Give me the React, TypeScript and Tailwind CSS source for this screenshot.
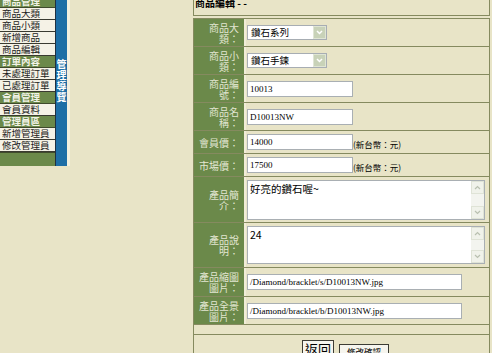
import React from 'react';

const cjk = "font-['Noto_Sans_CJK_TC',sans-serif]";
const serif = "font-['Liberation_Serif','Noto_Sans_CJK_TC',serif]";

const menu: { text: string; head?: boolean }[] = [
	{text: '商品管理', head: true},
	{text: '商品大類'},
	{text: '商品小類'},
	{text: '新增商品'},
	{text: '商品編輯'},
	{text: '訂單內容', head: true},
	{text: '未處理訂單'},
	{text: '已處理訂單'},
	{text: '會員管理', head: true},
	{text: '會員資料'},
	{text: '管理員區', head: true},
	{text: '新增管理員'},
	{text: '修改管理員'},
];

interface IRowProps {
	label: React.ReactNode,
	className: string,
	children?: React.ReactNode
}

const Row = ({label, className, children}: IRowProps) => {
	return (
		<div className={`flex shrink-0 border-b border-[#858a5f] ${className}`}>
			<div className="w-[52px] shrink-0 bg-[#6b894a] border-r-[2px] border-[#f1edd8] flex items-center justify-end pl-[3px] pr-[5px]">
				<span className="text-[10px] leading-[11px] text-[#e2e6d2] text-right">{label}</span>
			</div>
			<div className="flex-1 flex items-center pl-[1px]">{children}</div>
		</div>
	);
};

const Select = ({value}: { value: string }) => (
	<div className="w-[80px] h-[15px] bg-white border border-[#a7adb3] flex items-center justify-between">
		<span className="text-[9.5px] leading-[13px] pl-[3px] text-black">{value}</span>
		<div className="w-[13px] h-[13px] bg-[#c8d2b8] border border-[#dfe5d4] flex items-center justify-center">
			<svg width="7" height="5" viewBox="0 0 7 5">
				<path d="M1 1 L3.5 3.5 L6 1" stroke="#ffffff" strokeWidth="1.5" fill="none"/>
			</svg>
		</div>
	</div>
);

const Input = ({value, className}: { value: string, className: string }) => (
	<div className={`h-[16px] bg-white border border-[#a9afb3] flex items-center pl-[2px] ${className}`}>
		<span className={`${serif} text-[9px] leading-[12px] text-black whitespace-nowrap`}>{value}</span>
	</div>
);

const TextArea = ({value, className}: { value: string, className: string }) => (
	<div className={`w-[238px] bg-white border border-[#a9afb3] flex ${className}`}>
		<span className="flex-1 text-[10.5px] leading-[13px] pl-[2px] pt-[1px] text-black">{value}</span>
		<div className="w-[13px] bg-[#f3f4ef] flex flex-col justify-between">
			<div className="h-[13px] bg-[#f0f2ea] border border-[#dfe3d6] flex items-center justify-center">
				<svg width="7" height="5" viewBox="0 0 7 5">
					<path d="M1 4 L3.5 1.5 L6 4" stroke="#b9c0b0" strokeWidth="1.2" fill="none"/>
				</svg>
			</div>
			<div className="h-[13px] bg-[#f0f2ea] border border-[#dfe3d6] flex items-center justify-center">
				<svg width="7" height="5" viewBox="0 0 7 5">
					<path d="M1 1 L3.5 3.5 L6 1" stroke="#b9c0b0" strokeWidth="1.2" fill="none"/>
				</svg>
			</div>
		</div>
	</div>
);

const App = () => {
	return (
		<div className={`w-[492px] h-[353px] overflow-hidden bg-[#e8e4c7] flex ${cjk}`}>
			<div className="w-[55px] shrink-0 self-start flex flex-col -mt-[4px]">
				{menu.map((item) => (
					<div key={item.text}
							 className={item.head
								 ? "h-[12px] shrink-0 bg-[#6b894a] border-b border-[#3f4a2c] text-[#f2f3e6] font-bold text-[9.5px] leading-[11px] pl-[2px] whitespace-nowrap"
								 : "h-[12px] shrink-0 bg-[#f5f2e6] border-b border-[#3a3a30] text-[#1a1a1a] text-[9.5px] leading-[11px] pl-[2px] whitespace-nowrap"}>
						{item.text}
					</div>
				))}
				<div className="h-[14px] shrink-0 bg-[#6b894a] border-t border-[#3f4a2c]"/>
			</div>
			<div className="w-[12px] h-[166px] shrink-0 bg-[#1d6ea6] border-l border-[#203040] flex flex-col items-center pt-[59px]">
				<span className="[writing-mode:vertical-rl] text-white text-[10px] leading-[11px] tracking-[1px] font-bold">管理導覽</span>
			</div>
			<div className="w-[3px] h-[166px] shrink-0 bg-[#f3f0de]"/>

			<div className="ml-auto mr-[2px] w-[297px] shrink-0 flex flex-col">
				<div className="h-[16px] shrink-0 border-l border-r border-b border-[#858a5f] overflow-hidden">
					<div className="-mt-[3px] pl-[1px] text-[10px] leading-[12px] font-bold text-black">商品編輯 - -</div>
				</div>
				<div className="h-[2px] shrink-0"/>
				<div className="flex flex-col shrink-0 border-l border-r border-t border-[#858a5f]">
					<Row label="商品大類：" className="h-[28px]">
						<Select value="鑽石系列"/>
					</Row>
					<Row label="商品小類：" className="h-[28px]">
						<Select value="鑽石手鍊"/>
					</Row>
					<Row label="商品編號：" className="h-[28px]">
						<Input value="10013" className="w-[106px]"/>
					</Row>
					<Row label="商品名稱：" className="h-[28px]">
						<Input value="D10013NW" className="w-[106px]"/>
					</Row>
					<Row label="會員價：" className="h-[23px]">
						<Input value="14000" className="w-[106px]"/>
						<span className="text-[8.5px] leading-[10px] mt-[4px] text-black">(新台幣：元)</span>
					</Row>
					<Row label="市場價：" className="h-[23px]">
						<Input value="17500" className="w-[106px]"/>
						<span className="text-[8.5px] leading-[10px] mt-[4px] text-black">(新台幣：元)</span>
					</Row>
					<Row label="產品簡介：" className="h-[46px]">
						<TextArea value="好亮的鑽石喔~" className="h-[40px]"/>
					</Row>
					<Row label="產品說明：" className="h-[45px]">
						<TextArea value="24" className="h-[38px]"/>
					</Row>
					<Row label="產品縮圖圖片：" className="h-[29px]">
						<Input value="/Diamond/bracklet/s/D10013NW.jpg" className="w-[215px]"/>
					</Row>
					<Row label="產品全景圖片：" className="h-[28px]">
						<Input value="/Diamond/bracklet/b/D10013NW.jpg" className="w-[215px]"/>
					</Row>
					<div className="h-[10px] shrink-0 border-b border-[#858a5f]"/>
					<div className="h-[30px] shrink-0 flex items-start justify-center gap-[5px] pl-[8px]">
						<div className="mt-[5px] h-[17px] px-[2px] bg-[#f6f5ee] border border-[#3d3d35] text-[13px] leading-[15px] text-black">返回</div>
						<div className="mt-[9px] h-[14px] w-[50px] bg-[#f6f5ee] border border-[#3d3d35] text-[8.5px] leading-[13px] text-center text-black">修改確認</div>
					</div>
				</div>
			</div>
		</div>
	);
};

export default App;
